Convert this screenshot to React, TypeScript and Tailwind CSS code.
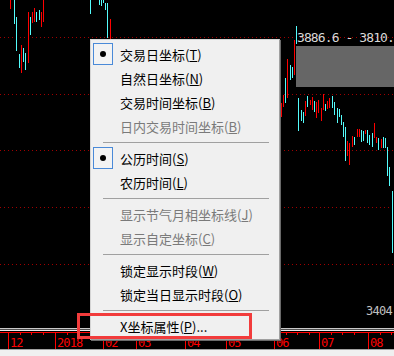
import { FC } from "react";

// bars: [x, top, bottom, colour]
const bars: [number, number, number, "r" | "c"][] = [
  [10, 0, 9, "r"], [14, 0, 24, "c"], [16, 17, 51, "c"], [19, 54, 68, "c"], [21, 45, 73, "r"],
  [23, 48, 62, "c"], [25, 53, 70, "c"], [28, 12, 63, "r"], [30, 17, 35, "c"], [32, 12, 23, "r"],
  [34, 8, 22, "r"], [36, 12, 22, "c"], [39, 10, 20, "c"], [41, 12, 27, "r"], [43, 0, 22, "r"],
  [90, 0, 14, "c"], [99, 0, 5, "c"], [101, 0, 6, "c"], [103, 0, 3, "c"], [105, 3, 10, "c"],
  [107, 3, 38, "c"], [110, 19, 40, "r"],
  [281, 103, 117, "r"], [283, 95, 107, "r"], [285, 78, 103, "c"], [287, 59, 98, "r"],
  [290, 65, 80, "c"], [292, 67, 78, "c"], [294, 40, 75, "r"], [296, 26, 44, "c"],
  [298, 98, 131, "c"], [301, 110, 121, "c"], [303, 112, 123, "c"], [305, 101, 116, "r"],
  [307, 96, 107, "c"], [310, 100, 105, "r"], [312, 97, 110, "r"], [314, 101, 112, "c"],
  [316, 102, 118, "r"], [318, 100, 113, "r"], [321, 108, 121, "r"], [323, 94, 110, "r"],
  [325, 104, 111, "c"], [327, 101, 109, "r"], [329, 98, 108, "r"], [332, 96, 108, "c"],
  [334, 102, 115, "c"], [337, 108, 123, "c"], [339, 109, 117, "c"], [341, 115, 125, "c"],
  [343, 122, 137, "c"], [345, 127, 161, "c"], [347, 141, 156, "r"], [349, 143, 165, "r"],
  [352, 136, 147, "r"], [354, 137, 145, "c"], [357, 129, 137, "r"], [359, 129, 137, "r"],
  [361, 130, 142, "c"], [363, 131, 141, "c"], [365, 130, 134, "r"], [367, 130, 143, "c"],
  [369, 135, 145, "c"], [372, 133, 147, "c"], [374, 123, 138, "r"], [376, 137, 143, "r"],
  [378, 138, 150, "c"], [381, 139, 148, "r"], [383, 137, 148, "c"], [385, 138, 148, "c"],
  [387, 147, 176, "c"], [389, 167, 186, "c"], [392, 191, 253, "c"],
];

const gridY = [37, 94, 150, 207, 264];

const majors: [number, string][] = [
  [8, "12"], [55, "2018"], [103, "02"], [136, "03"], [185, "04"],
  [226, "05"], [274, "06"], [319, "07"], [368, "08"],
];

const minors: number[] = [];
majors.forEach(([x], i) => {
  const next = i < majors.length - 1 ? majors[i + 1][0] : 400;
  for (let m = x + 11.5; m < next - 5; m += 11.5) minors.push(Math.round(m));
});

type Item =
  | { sep: true }
  | { sep?: false; text: string; key: string; tail?: string; checked?: boolean; disabled?: boolean };

const items: Item[] = [
  { text: "交易日坐标", key: "T", checked: true },
  { text: "自然日坐标", key: "N" },
  { text: "交易时间坐标", key: "B" },
  { text: "日内交易时间坐标", key: "B", disabled: true },
  { sep: true },
  { text: "公历时间", key: "S", checked: true },
  { text: "农历时间", key: "L" },
  { sep: true },
  { text: "显示节气月相坐标线", key: "J", disabled: true },
  { text: "显示自定坐标", key: "C", disabled: true },
  { sep: true },
  { text: "锁定显示时段", key: "W" },
  { text: "锁定当日显示时段", key: "O" },
  { sep: true },
  { text: "X坐标属性", key: "P", tail: "..." },
];

const Chart: FC = () => (
  <svg width={394} height={349} shapeRendering="crispEdges" className="block">
    {gridY.map((y) => (
      <line key={y} x1={0} x2={394} y1={y + 0.5} y2={y + 0.5} stroke="#a00000" strokeDasharray="1 3" />
    ))}
    {bars.map(([x, t, b, c], i) => (
      <rect key={i} x={x} y={t} width={1} height={b - t} fill={c === "r" ? "#ff0000" : "#54fcfc"} />
    ))}
    <rect x={296} y={46} width={98} height={41} fill="#666666" />
    <text x={297} y={42} fill="#d8d8d8" fontSize={13} letterSpacing={-0.9} fontFamily="DejaVu Sans Mono, monospace">
      3886.6 - 3810.
    </text>
    <text x={366} y={315} fill="#c0c0c0" fontSize={12} letterSpacing={-0.7} fontFamily="DejaVu Sans Mono, monospace">
      3404
    </text>
    {/* axis */}
    <rect x={0} y={328} width={394} height={1} fill="#c8c8c8" />
    <rect x={0} y={329} width={394} height={1} fill="#505050" />
    <rect x={0} y={330} width={394} height={1} fill="#e8e8e8" />
    <rect x={0} y={332} width={394} height={1} fill="#ff0000" />
    {minors.map((x) => (
      <rect key={"m" + x} x={x} y={332} width={1} height={3} fill="#ff0000" />
    ))}
    {majors.map(([x, label]) => (
      <g key={label}>
        <rect x={x} y={332} width={1} height={17} fill="#ff0000" />
        <text x={x + 2} y={347} fill="#ff0000" fontSize={12} letterSpacing={-0.9} fontFamily="DejaVu Sans Mono, monospace">
          {label}
        </text>
      </g>
    ))}
  </svg>
);

const Menu: FC = () => (
  <div className="absolute left-[90px] top-[39px] w-[190px] bg-[#f0f0f0] border border-[#d4d4d4] border-r-[#a0a0a0] border-b-[#a0a0a0] shadow-[1px_1px_0_#6a6a6a] pt-[2px] pb-[1px] font-['Noto_Sans_CJK_SC',sans-serif] text-[13px] leading-none">
    {items.map((it, i) =>
      it.sep ? (
        <div key={i} className="h-[8px] flex items-center">
          <div className="h-px flex-1 ml-[12px] mr-[10px] bg-[#a0a0a0]" />
        </div>
      ) : (
        <div
          key={i}
          className={`h-[24px] flex items-center ${it.disabled ? "text-[#7a7a7a]" : "text-black"}`}
        >
          <div className="w-[29px] h-full flex items-center">
            {it.checked && (
              <div className="ml-[2px] w-[20px] h-[22px] border border-[#4a8ad8] bg-[#f3f3f3] flex items-center justify-center">
                <div className="w-[6px] h-[6px] rounded-full bg-black" />
              </div>
            )}
          </div>
          <span className="whitespace-nowrap">
            {it.text}(<u>{it.key}</u>){it.tail}
          </span>
        </div>
      )
    )}
  </div>
);

export default function App() {
  return (
    <div className="relative w-[394px] h-[356px] bg-black overflow-hidden flex flex-col">
      <Chart />
      <div className="h-px bg-[#a0a0a0]" />
      <div className="flex-1 bg-[#f0f0f0]" />
      <Menu />
      <div className="absolute left-[77px] top-[313px] w-[175px] h-[26px] border-[3px] border-[#f23c3c]" />
    </div>
  );
}
